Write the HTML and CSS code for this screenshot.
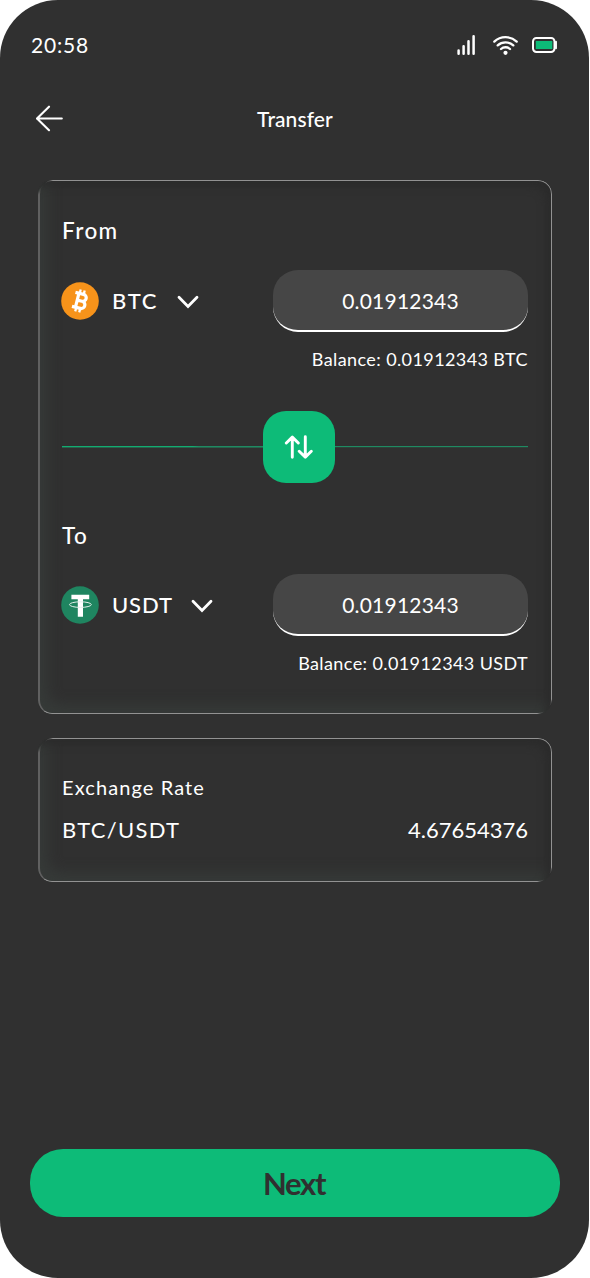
FILE: index.html
```html
<!DOCTYPE html>
<html lang="en">
<head>
<meta charset="utf-8">
<title>Transfer</title>
<link rel="stylesheet" href="styles.css">
</head>
<body>
<main class="phone">
  <div class="status">
    <span class="time">20:58</span>
    <svg class="status-icons" width="102" height="24" viewBox="0 0 102 24" fill="none" stroke="#fff" stroke-linecap="round">
      <g stroke-width="2.5"><path d="M3.6 17.4v3.3M8.6 13.3v7.4M13.5 8.2v12.5M18.6 3.3v17.4"/></g>
      <g stroke-width="2.3"><path d="M39.3 8.6a16.5 16.5 0 0 1 22.4 0M42.7 12.4a11.6 11.6 0 0 1 15.6 0M46 16a6.7 6.7 0 0 1 9 0"/></g>
      <circle cx="50.5" cy="19.8" r="2.1" fill="#fff" stroke="none"/>
      <rect x="78" y="5" width="21.5" height="14" rx="3.4" stroke-width="2"/>
      <path d="M101 8.8v6.4" stroke-width="1.9"/>
      <rect x="80.8" y="8" width="16.5" height="8" fill="#0dbb78" stroke="none"/>
    </svg>
  </div>
  <header class="header">
    <svg class="back" width="28" height="28" viewBox="0 0 28 28" fill="none" stroke="#fff" stroke-width="2.1" stroke-linecap="round" stroke-linejoin="round"><path d="M25.8 13.5H1M13 1.7L1 13.5l12 11.7"/></svg>
    <h1 class="title">Transfer</h1>
  </header>
  <section class="card transfer">
    <h2 class="label">From</h2>
    <div class="row">
      <svg class="coin" width="38" height="38" viewBox="0 0 38 38">
        <circle cx="19" cy="19" r="18.8" fill="#f7931a"/>
        <g transform="translate(19.3 19) rotate(14)" fill="none" stroke="#fff">
          <path d="M-3.2 -7.1V7.1M-6.8 -7.2H1.6a3.5 3.5 0 0 1 0 7H-3M1.8 -.2a3.7 3.7 0 0 1 0 7.4H-6.8" stroke-width="3.2"/>
          <path d="M-2.4 -11.3V-7M1.7 -11.3V-7M-2.4 7v4.3M1.7 7v4.3" stroke-width="2.3"/>
        </g>
      </svg>
      <span class="ticker btc">BTC</span>
      <svg class="chevron" width="24" height="16" viewBox="0 0 24 16" fill="none" stroke="#fff" stroke-width="2.8" stroke-linecap="round" stroke-linejoin="miter"><path d="M3 3.2l9 9.2 9-9.2"/></svg>
      <div class="amount"><span class="digits">0.01912343</span></div>
    </div>
    <p class="balance">Balance: 0.01912343 BTC</p>
    <div class="divider">
      <span class="line strong"></span>
      <span class="swap"><svg width="30" height="24" viewBox="0 0 30 24" fill="none" stroke="#fff" stroke-width="2.9" stroke-linecap="round" stroke-linejoin="round"><path d="M8.3 22.3V2.2M2.3 8l6-5.9 6 5.9M21.3 1.8v20.1M15.2 16.2l6.1 5.9 6-5.9"/></svg></span>
      <span class="line"></span>
    </div>
    <h2 class="label">To</h2>
    <div class="row lower">
      <svg class="coin" width="38" height="38" viewBox="0 0 38 38">
        <circle cx="19" cy="19" r="18.8" fill="#1f8560"/>
        <path d="M10.4 8.8h17.8v4.4h-6.2v17.5h-5.2V13.2h-6.4z" fill="#fff"/>
        <ellipse cx="19.4" cy="18.6" rx="10.9" ry="2.8" fill="none" stroke="#e4f1ec" stroke-width="1"/>
      </svg>
      <span class="ticker usdt">USDT</span>
      <svg class="chevron" width="24" height="16" viewBox="0 0 24 16" fill="none" stroke="#fff" stroke-width="2.8" stroke-linecap="round" stroke-linejoin="miter"><path d="M3 3.2l9 9.2 9-9.2"/></svg>
      <div class="amount"><span class="digits">0.01912343</span></div>
    </div>
    <p class="balance">Balance: 0.01912343 USDT</p>
  </section>
  <section class="card rate">
    <p class="rate-title">Exchange Rate</p>
    <p class="rate-row"><span class="pair">BTC/USDT</span><span class="rate-value">4.67654376</span></p>
  </section>
  <button class="next" type="button">Next</button>
</main>
</body>
</html>
```
FILE: styles.css
```css
* { box-sizing: border-box; margin: 0; padding: 0; }
body { background: #fff; color: #fff; font-family: Lato, "Open Sans", sans-serif; }
.phone {
  width: 589px; height: 1278px; background: #303030; border-radius: 58px;
  display: flex; flex-direction: column; padding: 33px 29px 61px 30px;
}
.status { display: flex; justify-content: space-between; align-items: center; height: 24px; padding: 0 3px 0 1px; }
.time { font-size: 21px; line-height: 24px; letter-spacing: .8px; }
.header { display: grid; grid-template-columns: 28px 1fr 28px; align-items: center; height: 28px; margin-top: 48px; padding: 0 6px 0 6px; }
.title { font-size: 21px; line-height: 28px; font-weight: 500; text-align: center; letter-spacing: .1px; }
.card { position: relative; margin: 0 8px; border-radius: 14px; padding: 0 24px;
  box-shadow: inset -7px 7px 9px -1px #2b2b2b, inset 9px -9px 13px 0 #363a38; }
.card::before {
  content: ""; position: absolute; inset: 0; border: 1px solid #929292; border-left: 2px solid #606060; border-radius: 14px; pointer-events: none;
  -webkit-mask-image: linear-gradient(135deg, transparent 7px, #000 11px, #000 calc(100% - 11px), transparent calc(100% - 7px));
  mask-image: linear-gradient(135deg, transparent 7px, #000 11px, #000 calc(100% - 11px), transparent calc(100% - 7px));
}
.transfer { height: 534px; margin-top: 47px; padding-top: 37px; }
.label { font-size: 22.5px; line-height: 28px; font-weight: 500; letter-spacing: 1.4px; }
.row { display: flex; align-items: center; margin-top: 25px; height: 62px; }
.lower { margin-top: 24px; }
.coin { flex: none; margin: 0 0 1px -1px; }
.ticker { font-size: 22px; font-weight: 500; margin-left: 13px; padding-bottom: 2px; }
.btc { letter-spacing: 1.7px; }
.usdt { letter-spacing: .9px; }
.chevron { margin-left: 17.5px; margin-top: 2px; }
.amount {
  margin-left: auto; width: 255px; height: 62px; border-radius: 25px; background: #464646; border-bottom: 2px solid #fff;
  display: flex; align-items: center; justify-content: center; font-size: 21px; padding-top: 1px;
}
.digits { letter-spacing: .2px; }
.balance { margin-top: 15px; font-size: 18px; line-height: 24px; text-align: right; white-space: nowrap; letter-spacing: .4px; }
.divider { display: flex; align-items: center; height: 72px; margin: 40px 0 39px; }
.line { flex: 1 1 193px; height: 2px; background: linear-gradient(#1f8a62 50%, #2c4238 50%); }
.line.strong { flex-basis: 201px; background: linear-gradient(90deg, #12ac71 0 65%, #1f8a62 68%) top / 100% 1px no-repeat, #27614a; }
.swap { flex: none; width: 72px; height: 72px; border-radius: 23px; background: #0dbb78; display: flex; align-items: center; justify-content: center; }
.rate { height: 144px; margin-top: 24px; padding-top: 36px; }
.rate-title { font-size: 20px; line-height: 26px; letter-spacing: 1.1px; }
.rate-row { display: flex; justify-content: space-between; font-size: 22px; line-height: 30px; margin-top: 15px; }
.pair { letter-spacing: 1.3px; }
.next { margin-top: auto; height: 68px; border: 0; border-radius: 33px; background: #0dbb78; color: #303030; font: 700 31px/68px Lato, sans-serif; letter-spacing: -1.3px; padding-right: 2px; }
```
